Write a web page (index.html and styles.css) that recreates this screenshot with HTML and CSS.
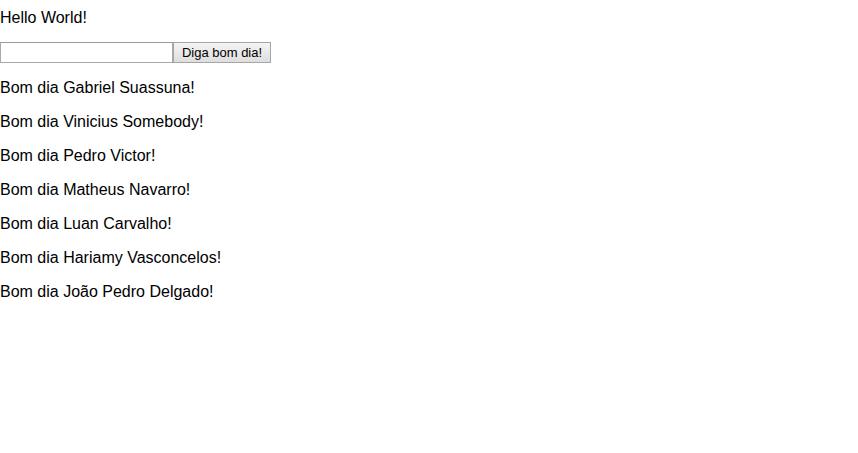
FILE: index.html
```html
<!DOCTYPE html>
<html>
<head>
<meta charset="utf-8">
<link rel="stylesheet" href="styles.css">
</head>
<body>
<div class="page">
  <div class="hello">Hello World!</div>
  <form class="greet" onsubmit="return false">
    <input class="name" type="text">
    <button class="btn" type="button">Diga bom dia!</button>
  </form>
  <p class="msg">Bom dia Gabriel Suassuna!</p>
  <p class="msg">Bom dia Vinicius Somebody!</p>
  <p class="msg">Bom dia Pedro Victor!</p>
  <p class="msg">Bom dia Matheus Navarro!</p>
  <p class="msg">Bom dia Luan Carvalho!</p>
  <p class="msg">Bom dia Hariamy Vasconcelos!</p>
  <p class="msg">Bom dia João Pedro Delgado!</p>
</div>
</body>
</html>
```
FILE: styles.css
```css
html, body {
  margin: 0;
  padding: 0;
  background: #fff;
}
.page {
  padding-top: 9px;
  font-family: "Liberation Sans", Arial, sans-serif;
  font-size: 16px;
  line-height: 18px;
  color: #000;
}
.hello {
  margin: 0;
}
.greet {
  display: flex;
  align-items: stretch;
  margin: 15px 0 16px;
  height: 21px;
}
.name {
  box-sizing: border-box;
  width: 173px;
  height: 21px;
  margin: 0;
  padding: 1px 2px;
  border: 1px solid #a9a9a9;
  border-top-color: #999;
  font-family: "Liberation Sans", Arial, sans-serif;
  font-size: 13px;
  background: #fff;
}
.btn {
  box-sizing: border-box;
  width: 98px;
  height: 21px;
  margin: 0;
  padding: 0 6px;
  border: 1px solid #a5a5a5;
  border-radius: 0;
  background: linear-gradient(#f4f4f4, #dedede);
  font-family: "Liberation Sans", Arial, sans-serif;
  font-size: 13px;
  color: #000;
  line-height: 17px;
}
.msg {
  margin: 0 0 16px;
}
```
